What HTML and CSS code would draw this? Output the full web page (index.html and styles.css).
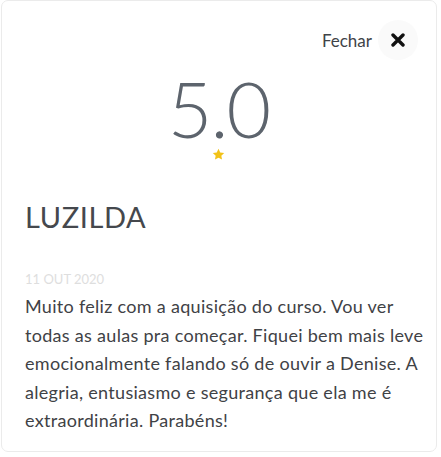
FILE: index.html
```html
<!DOCTYPE html>
<html lang="pt">
<head>
<meta charset="utf-8">
<link rel="stylesheet" href="styles.css">
</head>
<body>
<div class="card">
  <div class="top">
    <span class="close-label">Fechar</span>
    <button class="close-btn" aria-label="Fechar">
      <svg width="14" height="14" viewBox="0 0 14 14"><path d="M2 2 L12 12 M12 2 L2 12" stroke="#111" stroke-width="3.4" stroke-linecap="round"/></svg>
    </button>
  </div>
  <div class="score">5.0</div>
  <div class="stars">
    <svg width="13" height="13" viewBox="0 0 24 24"><path d="M12 1.5l3.2 6.6 7.3 1-5.3 5.1 1.3 7.2L12 18l-6.5 3.4 1.3-7.2L1.5 9.1l7.3-1z" fill="#f2c218"/></svg>
  </div>
  <h2 class="name">LUZILDA</h2>
  <div class="date">11 OUT 2020</div>
  <p class="text">Muito feliz com a aquisição do curso. Vou ver todas as aulas pra começar. Fiquei bem mais leve emocionalmente falando só de ouvir a Denise. A alegria, entusiasmo e segurança que ela me é extraordinária. Parabéns!</p>
</div>
</body>
</html>
```
FILE: styles.css
```css
html, body {
  margin: 0;
  padding: 0;
  background: #ffffff;
}
body {
  font-family: Lato, "Open Sans", sans-serif;
  color: #3f4246;
}
.card {
  box-sizing: border-box;
  width: 436px;
  height: 452px;
  margin: 0 0 0 1px;
  border: 1px solid #ebebeb;
  border-radius: 7px;
  padding: 19px 18px 0 23px;
}
.top {
  display: flex;
  justify-content: flex-end;
  align-items: center;
  gap: 6px;
}
.close-label {
  font-size: 17px;
  color: #404348;
}
.close-btn {
  width: 40px;
  height: 40px;
  border-radius: 50%;
  border: none;
  background: #fafafa;
  display: flex;
  align-items: center;
  justify-content: center;
  padding: 0;
}
.score {
  text-align: center;
  font-size: 77px;
  font-weight: 300;
  color: #5d646d;
  line-height: 80px;
  letter-spacing: -2px;
  margin-top: 8px;
  margin-right: 6px;
}
.stars {
  display: flex;
  justify-content: center;
  margin-top: 0;
  margin-right: 6px;
}
.name {
  margin: 38px 0 0;
  font-size: 29px;
  font-weight: 400;
  letter-spacing: 0.6px;
  color: #45484d;
  line-height: 36px;
}
.date {
  margin-top: 37px;
  font-size: 13px;
  color: #dedede;
  line-height: 14px;
}
.text {
  margin: 6px -10px 0 0;
  font-size: 18px;
  letter-spacing: 0.3px;
  line-height: 28.5px;
  color: #3f4246;
}
```
